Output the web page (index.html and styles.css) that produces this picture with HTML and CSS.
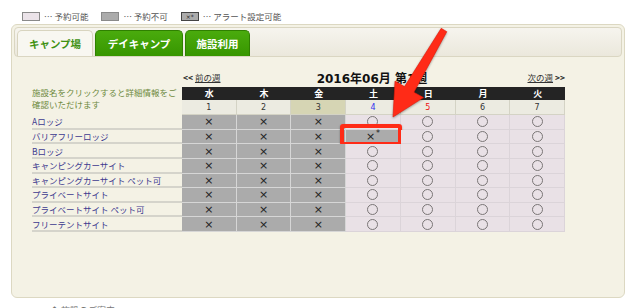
FILE: index.html
```html
<!DOCTYPE html>
<html lang="ja">
<head>
  <meta charset="UTF-8">
  <title>空き状況カレンダー</title>
  <link rel="stylesheet" href="styles.css">
</head>
<body>
  <div class="legend">
    <span class="legend-item"><span class="swatch swatch-open"></span>… 予約可能</span>
    <span class="legend-item"><span class="swatch swatch-closed"></span>… 予約不可</span>
    <span class="legend-item"><span class="swatch swatch-alert">×*</span>… アラート設定可能</span>
  </div>

  <div class="panel">
    <div class="tabbar">
      <a class="tab tab-active">キャンプ場</a>
      <a class="tab">デイキャンプ</a>
      <a class="tab">施設利用</a>
    </div>
    <div class="content">
      <div class="schedule" id="schedule">
        <div class="corner"></div>
        <div class="nav">
          <a class="nav-link">&lt;&lt; <u>前の週</u></a>
          <span class="nav-title">2016年06月 第1週</span>
          <a class="nav-link"><u>次の週</u> &gt;&gt;</a>
        </div>
        <div class="intro">施設名をクリックすると詳細情報をご確認いただけます</div>
      </div>
    </div>
  </div>

  <div class="below">◆ 施設のご案内</div>

  <svg class="arrow" width="640" height="308" viewBox="0 0 640 308">
    <polygon points="441.2,28.3 446.8,31.7 413.9,92.2 423.5,97.6 393,117 395,81 404.5,86.6" fill="#ff2b17" stroke="#e01a08" stroke-width="0.6" stroke-linejoin="round"/>
  </svg>

  <script>
    const schedule = document.getElementById('schedule');
    const days = ['水', '木', '金', '土', '日', '月', '火'];
    const dates = [1, 2, 3, 4, 5, 6, 7];
    const sites = [
      'Aロッジ',
      'バリアフリーロッジ',
      'Bロッジ',
      'キャンピングカーサイト',
      'キャンピングカーサイト ペット可',
      'プライベートサイト',
      'プライベートサイト ペット可',
      'フリーテントサイト'
    ];

    // header row: weekdays
    days.forEach(day => {
      const cell = document.createElement('div');
      cell.className = 'day';
      cell.textContent = day;
      schedule.appendChild(cell);
    });

    // date row
    dates.forEach((date, i) => {
      const cell = document.createElement('div');
      cell.className = 'date';
      if (i === 2) cell.classList.add('today');
      if (i === 3) cell.classList.add('sat');
      if (i === 4) cell.classList.add('sun');
      cell.textContent = date;
      schedule.appendChild(cell);
    });

    // one row per site
    sites.forEach((site, row) => {
      const label = document.createElement('a');
      label.className = 'site';
      label.textContent = site;
      schedule.appendChild(label);

      days.forEach((day, col) => {
        const cell = document.createElement('div');
        if (col < 3) {
          cell.className = 'cell closed';
          cell.innerHTML = '<span class="mark-x">×</span>';
        } else if (row === 1 && col === 3) {
          cell.className = 'cell closed alert';
          cell.innerHTML = '<span class="mark-x">×</span><span class="star">*</span><span class="highlight"></span>';
        } else {
          cell.className = 'cell open';
          cell.innerHTML = '<span class="mark-o"></span>';
        }
        schedule.appendChild(cell);
      });
    });
  </script>
</body>
</html>
```

FILE: styles.css
```css
* {
  box-sizing: border-box;
}
body {
  margin: 0;
  position: relative;
  width: 640px;
  height: 308px;
  overflow: hidden;
  background: #fff;
  font-family: "Noto Sans CJK JP", sans-serif;
  font-size: 8.5px;
  color: #333;
}
a {
  cursor: pointer;
}

/* legend */
.legend {
  display: flex;
  align-items: center;
  height: 24px;
  padding: 8px 0 0 22px;
  color: #555;
}
.legend-item {
  display: flex;
  align-items: center;
  margin-right: 13px;
}
.swatch {
  width: 18px;
  height: 9px;
  margin-right: 4px;
  border: 1px solid #8a8a8a;
}
.swatch-open {
  background: #ebe3e9;
}
.swatch-closed {
  background: #ababab;
}
.swatch-alert {
  background: #ababab;
  border-color: #444;
  font-family: "DejaVu Sans", sans-serif;
  font-size: 6px;
  line-height: 7px;
  text-align: center;
  color: #222;
}

/* panel & tabs */
.panel {
  margin-left: 11px;
  width: 614px;
  height: 274px;
  padding: 2px;
  border: 1px solid #dcd8c2;
  border-radius: 6px;
  background: #f4f2e5;
}
.tabbar {
  display: flex;
  align-items: flex-end;
  gap: 2px;
  height: 30px;
  padding-left: 2px;
  border: 1px solid #dad6c2;
  border-radius: 4px;
  background: linear-gradient(#f6f4ee, #ebe8dc);
}
.tab {
  display: flex;
  align-items: center;
  justify-content: center;
  height: 26px;
  border: 1px solid #2f8000;
  border-bottom: none;
  border-radius: 5px 5px 0 0;
  background: linear-gradient(#4aab0d, #379600);
  color: #fff;
  font-size: 10.5px;
  font-weight: bold;
}
.tab:nth-child(1) {
  width: 76px;
}
.tab:nth-child(2) {
  width: 88px;
}
.tab:nth-child(3) {
  width: 65px;
}
.tab-active {
  border-color: #d8d4bf;
  background: #f8f7f1;
  color: #3f9112;
}

/* schedule grid */
.content {
  padding: 12px 0 0 18px;
}
.schedule {
  display: grid;
  grid-template-columns: 150px repeat(7, 1fr);
  grid-template-rows: 18px 13px 15px repeat(8, 14.625px);
  width: 533px;
}
.corner {
  grid-row: 1;
  grid-column: 1;
}
.nav {
  grid-row: 1;
  grid-column: 2 / 9;
  display: flex;
  align-items: center;
  justify-content: space-between;
  padding: 0 0 2px 1px;
  color: #222;
  font-weight: bold;
}
.nav-link u {
  font-weight: normal;
  color: #333;
}
.nav-title {
  margin-left: -4px;
  font-family: "DejaVu Sans", "Noto Sans CJK JP", sans-serif;
  font-size: 12px;
  font-weight: bold;
  color: #111;
}
.intro {
  grid-row: 2 / 4;
  grid-column: 1;
  padding: 0 4px 0 0;
  line-height: 11.5px;
  color: #6e8a40;
}
.day {
  grid-row: 2;
  display: flex;
  align-items: center;
  justify-content: center;
  background: #242424;
  color: #fff;
  font-size: 9px;
  font-weight: bold;
}
.date {
  grid-row: 3;
  display: flex;
  align-items: center;
  justify-content: center;
  border-right: 1px solid #d4d3c5;
  border-bottom: 1px solid #d4d3c5;
  background: #ecebe1;
  font-family: "DejaVu Sans", sans-serif;
  font-size: 8px;
  color: #333;
}
.date.today {
  background: #d6d5b4;
}
.date.sat {
  color: #3333ee;
}
.date.sun {
  color: #ee1111;
}
.site {
  display: flex;
  align-items: center;
  border-bottom: 2px solid #d5d4cb;
  color: #3d3a8f;
  white-space: nowrap;
}
.cell {
  position: relative;
  display: flex;
  align-items: center;
  justify-content: center;
  border-right: 1px solid #d6d6d6;
  border-bottom: 1px solid #d6d6d6;
}
.cell.closed {
  background: #ababab;
}
.cell.open {
  background: #e9e1e6;
  border-color: #dbd4d9;
}
.mark-x {
  font-family: "DejaVu Sans", sans-serif;
  font-size: 11px;
  line-height: 1;
  color: #222;
}
.star {
  margin: -6px 0 0 1px;
  font-family: "DejaVu Sans", sans-serif;
  font-size: 8px;
  color: #222;
}
.mark-o {
  width: 11px;
  height: 11px;
  border: 1px solid #7a7676;
  border-radius: 50%;
}

/* annotation */
.highlight {
  position: absolute;
  top: -6px;
  bottom: -3px;
  left: -6px;
  right: -2px;
  border: 4px solid #ff2b17;
  border-radius: 3px;
  box-shadow: 0 1px 2px rgba(0, 0, 0, 0.35);
}
.arrow {
  position: absolute;
  top: 0;
  left: 0;
  pointer-events: none;
  filter: drop-shadow(0 1px 1px rgba(0, 0, 0, 0.35));
}

.below {
  padding: 6px 0 0 50px;
  font-size: 9px;
  color: #777;
}
```
